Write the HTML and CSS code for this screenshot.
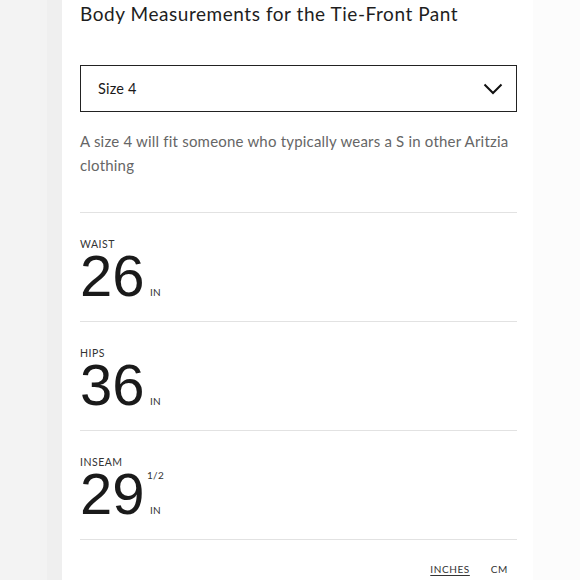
FILE: index.html
```html
<!DOCTYPE html>
<html lang="en">
<head>
<meta charset="utf-8">
<title>Body Measurements</title>
<link rel="stylesheet" href="styles.css">
</head>
<body>
<div class="page">
  <div class="gutter"></div>
  <div class="strip"></div>
  <main class="panel">
    <h1 class="title">Body Measurements for the Tie-Front Pant</h1>
    <div class="select">
      <span class="select-value">Size 4</span>
      <svg class="chevron" width="20" height="12" viewBox="0 0 20 12" aria-hidden="true">
        <path d="M1.5 1.5 L10 10 L18.5 1.5" fill="none" stroke="#111" stroke-width="2"/>
      </svg>
    </div>
    <p class="desc">A size 4 will fit someone who typically wears a S in other Aritzia clothing</p>

    <section class="measure">
      <div class="label">WAIST</div>
      <div class="value-row">
        <span class="num">26</span>
        <span class="units"><span class="frac"></span><span class="unit">IN</span></span>
      </div>
    </section>
    <section class="measure">
      <div class="label">HIPS</div>
      <div class="value-row">
        <span class="num">36</span>
        <span class="units"><span class="frac"></span><span class="unit">IN</span></span>
      </div>
    </section>
    <section class="measure">
      <div class="label">INSEAM</div>
      <div class="value-row">
        <span class="num">29</span>
        <span class="units"><span class="frac">1/2</span><span class="unit">IN</span></span>
      </div>
    </section>
    <div class="toggle">
      <span class="toggle-item active">INCHES</span>
      <span class="toggle-item">CM</span>
    </div>
  </main>
  <div class="side"></div>
</div>
</body>
</html>
```

FILE: styles.css
```css
html, body {
  margin: 0;
  padding: 0;
  background: #fafafa;
}
body {
  font-family: "Lato", "Noto Sans", sans-serif;
  color: #1a1a1a;
}
.page {
  display: flex;
  width: 580px;
  height: 580px;
  overflow: hidden;
}
.gutter {
  width: 47px;
  flex: none;
  background: #f3f3f3;
}
.strip {
  width: 15px;
  flex: none;
  background: #efefef;
}
.panel {
  width: 437px;
  flex: none;
  background: #fff;
  padding: 0 16px 0 18px;
  display: flex;
  flex-direction: column;
}
.side {
  flex: 1;
  background: #fcfcfc;
}
.title {
  margin: 0;
  font-weight: 400;
  font-size: 19px;
  line-height: 28px;
  letter-spacing: 0.55px;
  color: #1e1e1e;
}
.select {
  box-sizing: border-box;
  margin-top: 37px;
  height: 47px;
  border: 1.5px solid #222;
  display: flex;
  align-items: center;
  justify-content: space-between;
  padding: 0 13px 0 17px;
}
.select-value {
  font-size: 14.5px;
  letter-spacing: 0.2px;
  color: #1a1a1a;
}
.desc {
  margin: 17px 0 0;
  font-size: 15px;
  line-height: 24px;
  letter-spacing: 0.2px;
  color: #666;
  padding-bottom: 35px;
  border-bottom: 1px solid #e2e2e2;
}
.measure {
  padding: 25px 0 19px;
  border-bottom: 1px solid #e2e2e2;
}
.label {
  font-size: 10.5px;
  line-height: 12px;
  letter-spacing: 0.5px;
  color: #333;
}
.value-row {
  display: flex;
  align-items: stretch;
}
.num {
  font-family: "Liberation Sans", Arial, sans-serif;
  font-size: 58px;
  line-height: 52px;
  color: #1a1a1a;
}
.units {
  width: 16px;
  display: flex;
  flex-direction: column;
  justify-content: space-between;
  align-items: center;
  margin-left: 3px;
  padding: 1px 0 4px;
  font-size: 10px;
  line-height: 12px;
  color: #333;
  letter-spacing: 0.3px;
}
.toggle {
  display: flex;
  justify-content: flex-end;
  gap: 21px;
  padding: 23px 9px 0 0;
}
.toggle-item {
  font-size: 10px;
  line-height: 12px;
  letter-spacing: 0.6px;
  color: #333;
}
.toggle-item.active {
  text-decoration: underline;
  text-underline-offset: 2px;
}
```
